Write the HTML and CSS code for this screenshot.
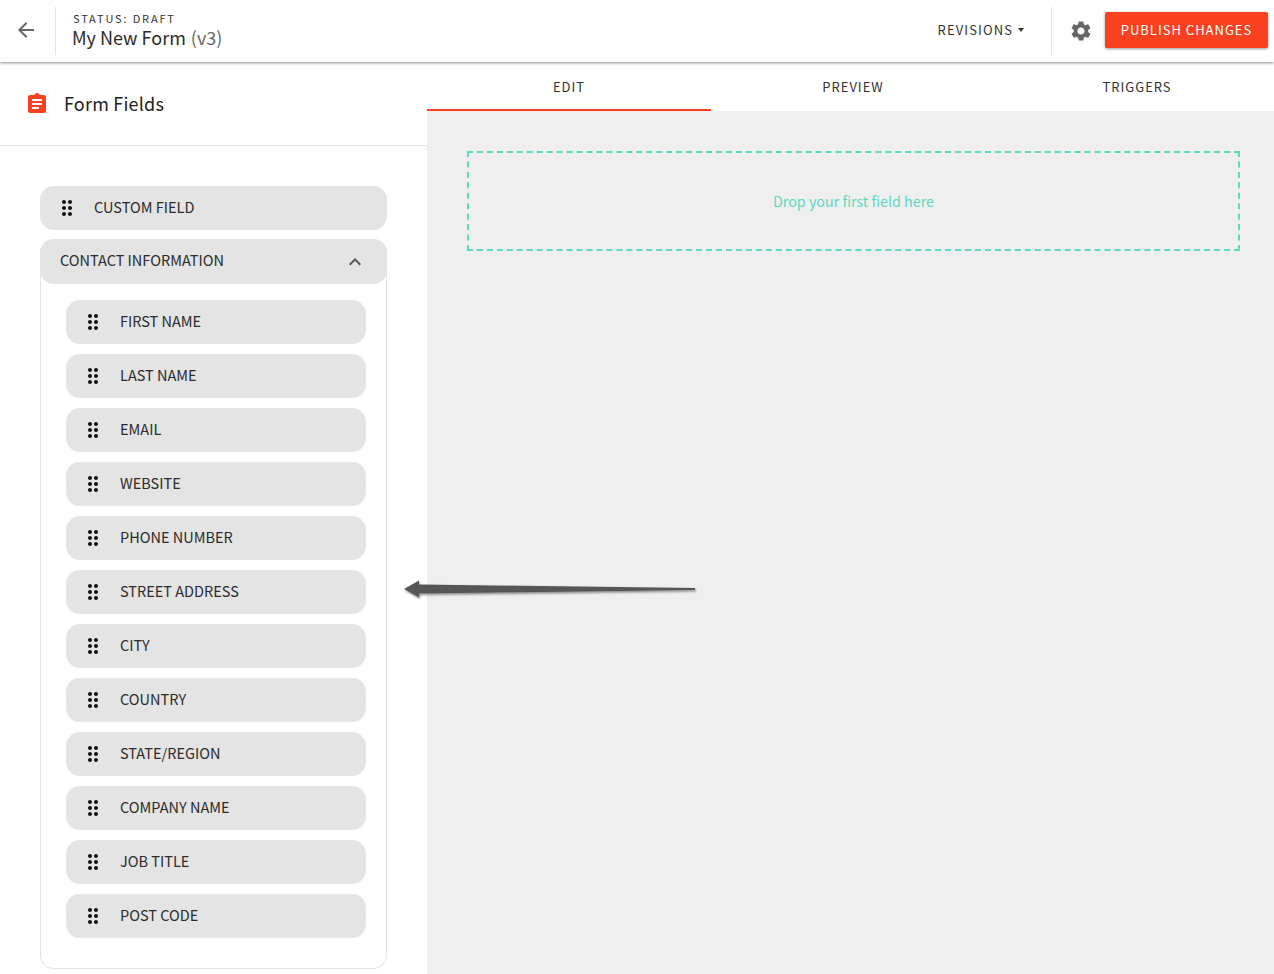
FILE: index.html
```html
<!DOCTYPE html>
<html lang="en">
  <head>
    <meta charset="UTF-8" />
    <title>My New Form</title>
    <link rel="stylesheet" href="styles.css">
  </head>
  <body>
    <svg class="defs" width="0" height="0">
      <symbol id="drag" viewBox="0 0 24 24">
        <path d="M11 18c0 1.1-.9 2-2 2s-2-.9-2-2 .9-2 2-2 2 .9 2 2zm-2-8c-1.1 0-2 .9-2 2s.9 2 2 2 2-.9 2-2-.9-2-2-2zm0-6c-1.1 0-2 .9-2 2s.9 2 2 2 2-.9 2-2-.9-2-2-2zm6 4c1.1 0 2-.9 2-2s-.9-2-2-2-2 .9-2 2 .9 2 2 2zm0 2c-1.1 0-2 .9-2 2s.9 2 2 2 2-.9 2-2-.9-2-2-2zm0 6c-1.1 0-2 .9-2 2s.9 2 2 2 2-.9 2-2-.9-2-2-2z" />
      </symbol>
    </svg>

    <header class="topbar">
      <svg class="back-icon" viewBox="0 0 24 24"><path d="M20 11H7.83l5.59-5.59L12 4l-8 8 8 8 1.41-1.41L7.83 13H20v-2z" /></svg>
      <div class="topbar-sep"></div>
      <div class="form-title">
        <div class="status">STATUS: DRAFT</div>
        <div class="name">My New Form <span class="version">(v3)</span></div>
      </div>
      <div class="revisions">REVISIONS<span class="caret"></span></div>
      <div class="topbar-sep"></div>
      <svg class="gear-icon" viewBox="0 0 24 24"><path d="M19.14 12.94c.04-.3.06-.61.06-.94 0-.32-.02-.64-.07-.94l2.03-1.58c.18-.14.23-.41.12-.61l-1.92-3.32c-.12-.22-.37-.29-.59-.22l-2.39.96c-.5-.38-1.03-.7-1.62-.94l-.36-2.54c-.04-.24-.24-.41-.48-.41h-3.84c-.24 0-.43.17-.47.41l-.36 2.54c-.59.24-1.13.57-1.62.94l-2.39-.96c-.22-.08-.47 0-.59.22L2.74 8.87c-.12.21-.08.47.12.61l2.03 1.58c-.05.3-.09.63-.09.94s.02.64.07.94l-2.03 1.58c-.18.14-.23.41-.12.61l1.92 3.32c.12.22.37.29.59.22l2.39-.96c.5.38 1.03.7 1.62.94l.36 2.54c.05.24.24.41.48.41h3.84c.24 0 .44-.17.47-.41l.36-2.54c.59-.24 1.13-.56 1.62-.94l2.39.96c.22.08.47 0 .59-.22l1.92-3.32c.12-.22.07-.47-.12-.61l-2.01-1.58zM12 15.6c-1.98 0-3.6-1.62-3.6-3.6s1.62-3.6 3.6-3.6 3.6 1.62 3.6 3.6-1.62 3.6-3.6 3.6z" /></svg>
      <button class="publish">PUBLISH CHANGES</button>
    </header>

    <div class="page">
      <aside class="sidebar">
        <div class="sidebar-head">
          <svg class="clipboard-icon" viewBox="0 0 24 24"><path d="M19 3h-4.18C14.4 1.84 13.3 1 12 1c-1.3 0-2.4.84-2.82 2H5c-1.1 0-2 .9-2 2v14c0 1.1.9 2 2 2h14c1.1 0 2-.9 2-2V5c0-1.1-.9-2-2-2zm-5 14H7v-2h7v2zm3-4H7v-2h10v2zm0-4H7V7h10v2z" /></svg>
          <h2>Form Fields</h2>
        </div>
        <div class="field-list">
          <div class="chip"><svg class="drag-icon"><use href="#drag" /></svg>CUSTOM FIELD</div>
          <div class="group">
            <div class="group-head">
              CONTACT INFORMATION
              <svg class="chevron" viewBox="0 0 24 24"><path d="M12 8l-6 6 1.41 1.41L12 10.83l4.59 4.58L18 14z" /></svg>
            </div>
            <div class="group-body">
              <div class="chip"><svg class="drag-icon"><use href="#drag" /></svg>FIRST NAME</div>
              <div class="chip"><svg class="drag-icon"><use href="#drag" /></svg>LAST NAME</div>
              <div class="chip"><svg class="drag-icon"><use href="#drag" /></svg>EMAIL</div>
              <div class="chip"><svg class="drag-icon"><use href="#drag" /></svg>WEBSITE</div>
              <div class="chip"><svg class="drag-icon"><use href="#drag" /></svg>PHONE NUMBER</div>
              <div class="chip"><svg class="drag-icon"><use href="#drag" /></svg>STREET ADDRESS</div>
              <div class="chip"><svg class="drag-icon"><use href="#drag" /></svg>CITY</div>
              <div class="chip"><svg class="drag-icon"><use href="#drag" /></svg>COUNTRY</div>
              <div class="chip"><svg class="drag-icon"><use href="#drag" /></svg>STATE/REGION</div>
              <div class="chip"><svg class="drag-icon"><use href="#drag" /></svg>COMPANY NAME</div>
              <div class="chip"><svg class="drag-icon"><use href="#drag" /></svg>JOB TITLE</div>
              <div class="chip"><svg class="drag-icon"><use href="#drag" /></svg>POST CODE</div>
            </div>
          </div>
        </div>
      </aside>

      <main class="editor">
        <nav class="tabs">
          <div class="tab tab-sel">EDIT</div>
          <div class="tab">PREVIEW</div>
          <div class="tab">TRIGGERS</div>
        </nav>
        <div class="canvas">
          <div class="dropzone">Drop your first field here</div>
        </div>
      </main>
    </div>

    <!-- annotation arrow drawn over the page -->
    <svg class="note-arrow" viewBox="0 0 300 24">
      <defs>
        <filter id="arrow-shadow" x="-5%" y="-50%" width="110%" height="200%">
          <feDropShadow dx="1" dy="1.5" stdDeviation="1.2" flood-color="#000" flood-opacity="0.45" />
        </filter>
      </defs>
      <path d="M1 10 L16 1.5 L16 5.5 L292 9 L292 11 L16 14.5 L16 18.5 Z" fill="#565656" filter="url(#arrow-shadow)" />
    </svg>
  </body>
</html>
```

FILE: styles.css
```css
* {
  margin: 0;
  padding: 0;
  box-sizing: border-box;
}

html,
body {
  height: 974px;
  overflow: hidden;
}

body {
  position: relative;
  background: #fff;
  color: #2b2b2b;
  font-family: "Noto Sans CJK SC", "Open Sans", sans-serif;
}

.defs {
  position: absolute;
}

/* top bar */
.topbar {
  position: relative;
  z-index: 2;
  height: 62px;
  display: flex;
  align-items: center;
  background: #fff;
  box-shadow: 0 1px 3px rgba(0, 0, 0, 0.45);
  padding-right: 6px;
}

.back-icon {
  width: 24px;
  height: 24px;
  margin: 0 17px 2px 14px;
  fill: #666;
}

.topbar-sep {
  width: 1px;
  height: 48px;
  background: #e4e4e4;
}

.form-title {
  flex: 1;
  padding: 0 0 3px 16px;
}

.status {
  font-size: 11px;
  line-height: 14px;
  letter-spacing: 1.85px;
  color: #333;
  padding-left: 1px;
}

.name {
  font-size: 18px;
  line-height: 24px;
  color: #2b2b2b;
}

.version {
  color: #666;
  margin-left: 1px;
}

.revisions {
  display: flex;
  align-items: center;
  font-size: 13px;
  line-height: 18px;
  letter-spacing: 1.1px;
  color: #333;
  margin-right: 27px;
  padding-bottom: 2px;
}

.caret {
  width: 0;
  height: 0;
  margin-left: 5px;
  border-left: 3.5px solid transparent;
  border-right: 3.5px solid transparent;
  border-top: 4px solid #333;
}

.gear-icon {
  width: 24px;
  height: 24px;
  margin: 0 12px 0 17px;
  fill: #666;
}

.publish {
  width: 163px;
  height: 36px;
  margin-bottom: 2px;
  padding-bottom: 2px;
  border: 0;
  border-radius: 2px;
  background: #f9401f;
  color: #fff;
  font-family: inherit;
  font-size: 13px;
  letter-spacing: 1px;
  box-shadow: 0 1px 3px rgba(0, 0, 0, 0.4);
}

/* main columns */
.page {
  display: flex;
  height: 912px;
}

.sidebar {
  width: 427px;
  flex: none;
}

.sidebar-head {
  height: 84px;
  display: flex;
  align-items: center;
  padding-left: 25px;
  border-bottom: 1px solid #e4e4e4;
}

.clipboard-icon {
  width: 24px;
  height: 24px;
  margin-right: 15px;
  fill: #f9401f;
}

.sidebar-head h2 {
  font-size: 18px;
  font-weight: 400;
  line-height: 26px;
  letter-spacing: 0.2px;
  padding-bottom: 2px;
  color: #222;
}

.field-list {
  padding: 40px 40px 0;
}

.chip {
  height: 44px;
  display: flex;
  align-items: center;
  padding: 0 0 2px 15px;
  border-radius: 14px;
  background: #e4e4e4;
  font-size: 14.5px;
  line-height: 20px;
  color: #2b2b2b;
}

.drag-icon {
  width: 24px;
  height: 24px;
  margin: 2px 15px 0 0;
  fill: #111;
}

.group {
  margin-top: 9px;
  height: 730px;
  border: 1px solid #e4e4e4;
  border-top: 0;
  border-radius: 14px;
}

.group-head {
  height: 45px;
  margin: 0 -1px;
  display: flex;
  align-items: center;
  justify-content: space-between;
  padding: 0 20px 3px;
  border-radius: 14px;
  background: #e4e4e4;
  font-size: 14.5px;
  line-height: 20px;
  color: #2b2b2b;
}

.chevron {
  width: 24px;
  height: 24px;
  margin-top: 3px;
  fill: #555;
}

.group-body {
  display: flex;
  flex-direction: column;
  gap: 10px;
  padding: 16px 20px 0 25px;
}

/* right side */
.editor {
  flex: 1;
  min-width: 0;
  background: #efefef;
  overflow: hidden;
}

.tabs {
  height: 49px;
  display: flex;
  background: #fff;
}

.tab {
  flex: 0 0 284px;
  text-align: center;
  font-size: 13px;
  line-height: 49px;
  letter-spacing: 1px;
  color: #333;
}

.tab-sel {
  border-bottom: 2px solid #f9401f;
}

.canvas {
  padding: 40px 34px 0 40px;
}

.dropzone {
  height: 100px;
  display: flex;
  align-items: center;
  justify-content: center;
  padding-bottom: 2px;
  border: 2px dashed #5cd9bf;
  font-size: 14.3px;
  color: #5cd9bf;
}

.note-arrow {
  position: absolute;
  z-index: 3;
  left: 403px;
  top: 579px;
  width: 300px;
  height: 24px;
}
```
